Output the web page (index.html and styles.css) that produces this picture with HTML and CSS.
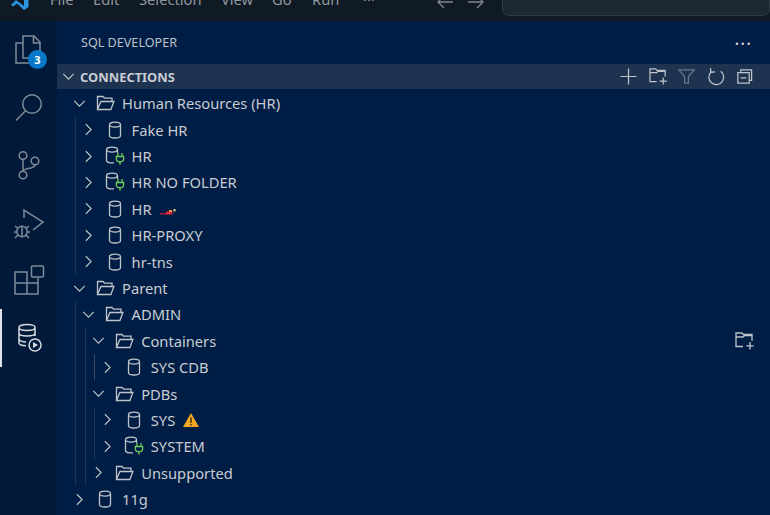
FILE: index.html
```html
<!DOCTYPE html>
<html lang="en">
<head>
<meta charset="utf-8">
<title>SQL Developer</title>
<link rel="stylesheet" href="styles.css">
</head>
<body>
<svg class="defs" width="0" height="0" aria-hidden="true">
  <defs>
    <symbol id="down" viewBox="0 0 14 8"><path d="M1 1l6 6 6-6"/></symbol>
    <symbol id="right" viewBox="0 0 8 14"><path d="M1 1l6 6-6 6"/></symbol>
    <symbol id="folder" viewBox="0 0 19 16"><path d="M1.500 14.500V1.500h5.500l1.600 1.700h7.400v3.300M1.500 14.500l3.400-8h13l-3 8z"/></symbol>
    <symbol id="db" viewBox="0 0 14 18"><path d="M1.500 4v10.500c0 1.500 2.500 2.500 5.500 2.500s5.500-1 5.500-2.500V4"/><ellipse cx="7" cy="3.600" rx="5.500" ry="2.500"/></symbol>
    <symbol id="dbplug" viewBox="0 0 20 20"><path d="M1.500 4v10.500c0 1.300 1.700 2.100 4 2.400h3.500M12.500 4v3"/><ellipse cx="7" cy="3.600" rx="5.500" ry="2.500"/><g class="plug"><path d="M13 7v3.500M17 7v3.500M11.400 10.500h7.200v2.500c0 1.500-1.500 2.700-3.600 2.700s-3.600-1.200-3.600-2.700zM15 15.700v3"/></g></symbol>
    <symbol id="folderplus" viewBox="0 0 20 18"><path d="M8 14.500H1V1h6l1.500 1.500h8.500V9M1 5h7l1.500-1.500H17"/><path d="M15 10v7.500M11.200 13.800h7.600"/></symbol>
  </defs>
</svg>
<div class="app">
  <header class="titlebar">
    <svg class="logo" viewBox="0 0 20 12"><path d="M14 0h4.500v9L14 12 7 5.500 3 8.500 1 7l5-5 8 6z"/></svg>
    <nav class="menu">
      <span class="m-file">File</span><span class="m-edit">Edit</span><span class="m-sel">Selection</span><span class="m-view">View</span><span class="m-go">Go</span><span class="m-run">Run</span><span class="m-more">···</span>
    </nav>
    <svg class="nav-arrow" viewBox="0 0 18 10"><path d="M17 3H2M8 -3L2 3l6 6"/></svg>
    <svg class="nav-arrow arrow-fwd" viewBox="0 0 18 10"><path d="M1 3h15M10 -3l6 6-6 6"/></svg>
    <div class="searchbox"></div>
  </header>
  <div class="main">
    <aside class="activity">
      <div class="act">
        <svg viewBox="0 0 32 32"><path d="M10 9H3v20h15v-5M10 2v22h17V8l-6-6zM20.500 2.500V9h6"/></svg>
        <span class="badge">3</span>
      </div>
      <div class="act"><svg viewBox="0 0 32 32"><circle cx="19" cy="13" r="9.300"/><path d="M12.300 20 3 29.500"/></svg></div>
      <div class="act"><svg viewBox="0 0 32 32"><circle cx="10" cy="6.500" r="3.800"/><circle cx="22" cy="12" r="3.800"/><circle cx="10" cy="26" r="3.800"/><path d="M10 10.500v11.500M22 16c0 4-12 3-12 6"/></svg></div>
      <div class="act"><svg viewBox="0 0 32 32"><path d="M11 11V3l19 12-10 8"/><circle cx="9" cy="24.500" r="5.200"/><path d="M2 19l3 2.500M16 19l-3 2.500M1 25h3M14 25h3M2 31l3-3M16 31l-3-3M9 19v11"/></svg></div>
      <div class="act"><svg viewBox="0 0 32 32"><path d="M2 8h12v22H2zM2 19h23v11H14M14 8v11M25 19v-5"/><rect x="18.500" y="2" width="12" height="11" rx="1"/></svg></div>
      <div class="act is-active"><svg viewBox="0 0 32 32"><path d="M6 5.500c0-1.800 3.500-3 8-3s8 1.200 8 3-3.500 3-8 3-8-1.200-8-3zM6 5.500V21c0 1.500 2.500 2.500 7 2.800M22 5.500V14M6 11c0 1.800 3.500 3 8 3s8-1.200 8-3M6 17c0 1.800 3.500 3 7 3"/><circle cx="22" cy="23" r="6"/><path class="fill" d="M20 20l5 3-5 3z"/></svg></div>
    </aside>
    <section class="sidebar">
      <div class="side-title"><span>SQL DEVELOPER</span><span class="dots">···</span></div>
      <div class="pane-head">
        <svg class="chev-d" aria-hidden="true"><use href="#down"/></svg>
        <span class="pane-name">CONNECTIONS</span>
        <div class="tools">
          <svg class="tool" viewBox="0 0 20 20"><path d="M10 1.500v17M1.500 10h17"/></svg>
          <svg class="tool tool-folder" viewBox="0 0 20 18"><use href="#folderplus"/></svg>
          <svg class="tool dim" viewBox="0 0 20 20"><path d="M2 3h16l-6 7v7H8v-7z"/></svg>
          <svg class="tool" viewBox="0 0 20 20"><path d="M4.800 1l.2 4.500 4.500-.3M15.500 4.500A7.800 7.800 0 1 1 5 5.500"/></svg>
          <svg class="tool" viewBox="0 0 20 20"><path d="M6 5V3h11.500v11H15M3 6h12v11H3zM6 11.500h6"/></svg>
        </div>
      </div>
      <div class="tree">
        <div class="row"><svg class="tw-d"><use href="#down"/></svg><span class="ic"><svg class="i-folder"><use href="#folder"/></svg></span><span>Human Resources (HR)</span></div>
        <div class="group">
          <div class="row"><svg class="tw-r"><use href="#right"/></svg><span class="ic"><svg class="i-db"><use href="#db"/></svg></span><span>Fake HR</span></div>
          <div class="row"><svg class="tw-r"><use href="#right"/></svg><span class="ic"><svg class="i-plug"><use href="#dbplug"/></svg></span><span>HR</span></div>
          <div class="row"><svg class="tw-r"><use href="#right"/></svg><span class="ic"><svg class="i-plug"><use href="#dbplug"/></svg></span><span>HR NO FOLDER</span></div>
          <div class="row"><svg class="tw-r"><use href="#right"/></svg><span class="ic"><svg class="i-db"><use href="#db"/></svg></span><span>HR</span>
            <svg class="car" viewBox="0 0 16 7"><path fill="#b3123a" d="M0 5h7v1.500H0z"/><path fill="#e0303a" d="M6 3.500h6v3H6z"/><path fill="#f08a3c" d="M9 2h3v2H9z"/><path fill="#e8d08a" d="M13.500 1h2v2.500h-2z"/><path fill="#4a1f4a" d="M12 3.500h2v3h-2z"/></svg>
          </div>
          <div class="row"><svg class="tw-r"><use href="#right"/></svg><span class="ic"><svg class="i-db"><use href="#db"/></svg></span><span>HR-PROXY</span></div>
          <div class="row"><svg class="tw-r"><use href="#right"/></svg><span class="ic"><svg class="i-db"><use href="#db"/></svg></span><span>hr-tns</span></div>
        </div>
        <div class="row"><svg class="tw-d"><use href="#down"/></svg><span class="ic"><svg class="i-folder"><use href="#folder"/></svg></span><span>Parent</span></div>
        <div class="group">
          <div class="row"><svg class="tw-d"><use href="#down"/></svg><span class="ic"><svg class="i-folder"><use href="#folder"/></svg></span><span>ADMIN</span></div>
          <div class="group">
            <div class="row"><svg class="tw-d"><use href="#down"/></svg><span class="ic"><svg class="i-folder"><use href="#folder"/></svg></span><span>Containers</span>
              <svg class="row-action" viewBox="0 0 20 18"><use href="#folderplus"/></svg>
            </div>
            <div class="group bright">
              <div class="row"><svg class="tw-r"><use href="#right"/></svg><span class="ic"><svg class="i-db"><use href="#db"/></svg></span><span>SYS CDB</span></div>
            </div>
            <div class="row"><svg class="tw-d"><use href="#down"/></svg><span class="ic"><svg class="i-folder"><use href="#folder"/></svg></span><span>PDBs</span></div>
            <div class="group">
              <div class="row"><svg class="tw-r"><use href="#right"/></svg><span class="ic"><svg class="i-db"><use href="#db"/></svg></span><span>SYS</span>
                <svg class="warn" viewBox="0 0 16 14"><path fill="#f5a623" d="M8 0l8 14H0z"/><path fill="#3a2a10" d="M7.300 4.500h1.400v5.500H7.300zM7.300 11h1.400v1.500H7.300z"/></svg>
              </div>
              <div class="row"><svg class="tw-r"><use href="#right"/></svg><span class="ic"><svg class="i-plug"><use href="#dbplug"/></svg></span><span>SYSTEM</span></div>
            </div>
            <div class="row"><svg class="tw-r"><use href="#right"/></svg><span class="ic"><svg class="i-folder"><use href="#folder"/></svg></span><span>Unsupported</span></div>
          </div>
        </div>
        <div class="row"><svg class="tw-r"><use href="#right"/></svg><span class="ic"><svg class="i-db"><use href="#db"/></svg></span><span>11g</span></div>
      </div>
    </section>
  </div>
</div>
</body>
</html>
```
FILE: styles.css
```css
html, body { margin: 0; padding: 0; height: 100%; }
body { overflow: hidden; background: #001e45; color: #c8ccd2; font-family: "Noto Sans", "Open Sans", sans-serif; font-size: 14.700px; }
.defs { position: absolute; }
svg { fill: none; stroke: #bfc4ca; stroke-width: 1.300; display: block; overflow: visible; }
.app { display: flex; flex-direction: column; width: 770px; height: 515px; overflow: hidden; }

.titlebar { height: 21px; flex: none; background: #0f1a24; display: flex; align-items: flex-start; position: relative; overflow: hidden; }
.logo { width: 20px; height: 12px; margin: -2px 0 0 10px; stroke: none; fill: #2a96e0; flex: none; }
.menu { display: flex; margin: -11px 0 0 20px; color: #8f969d; font-size: 14.700px; width: 381px; flex: none; }
.m-file { width: 43px; } .m-edit { width: 46px; } .m-sel { width: 82px; } .m-view { width: 51px; } .m-go { width: 40px; } .m-run { width: 51px; }
.nav-arrow { width: 18px; height: 10px; stroke: #808890; margin: -1px 0 0 5px; flex: none; }
.arrow-fwd { margin-left: 13px; }
.searchbox { margin: -10px 0 0 17px; flex: 1; height: 24px; background: #1e2833; border: 1px solid #2f3a44; border-radius: 7px; }

.main { flex: 1; display: flex; min-height: 0; }
.activity { width: 57px; flex: none; background: #021a3a; }
.act { height: 57.600px; display: flex; align-items: center; justify-content: center; position: relative; }
.act svg { width: 32px; height: 32px; stroke: #7f8a99; stroke-width: 1.500; }
.act.is-active { box-shadow: inset 2px 0 0 #dfe3e8; }
.act.is-active svg { stroke: #d5d9de; }
.fill { fill: #d5d9de; stroke: none; }
.badge { position: absolute; left: 28px; top: 29px; width: 19px; height: 19px; border-radius: 50%; background: #0a78c9; color: #fff; font-size: 11px; font-weight: 700; line-height: 19px; text-align: center; }

.sidebar { flex: 1; min-width: 0; background: #001e45; display: flex; flex-direction: column; }
.side-title { height: 43px; flex: none; display: flex; align-items: center; justify-content: space-between; padding: 0 18px 0 24px; font-size: 12.600px; color: #bcc2c9; }
.dots { font-size: 18px; color: #d5d9de; letter-spacing: 1px; }
.pane-head { height: 25px; flex: none; background: #1e3350; display: flex; align-items: center; font-weight: 700; font-size: 12.900px; color: #c8ccd2; }
.chev-d { width: 13px; height: 7px; margin-left: 5px; flex: none; }
.pane-name { margin-left: 5px; }
.tools { margin-left: auto; padding-right: 11px; display: flex; }
.tool { width: 19px; height: 19px; padding: 0 5px; box-sizing: content-box; stroke: #bfc4ca; }
.tool-folder { transform: translateX(1px); }
.tool.dim { stroke: #6b7688; }

.tree { padding: 1.100px 0 0 13px; font-size: 14.700px; }
.group { margin-left: 5px; border-left: 1px solid #1c3558; padding-left: 3.600px; }
.group.bright { border-left-color: #3b4a62; }
.row { height: 26.400px; display: flex; align-items: center; white-space: nowrap; }
.tw-d { width: 13px; height: 7px; margin: 0 2.500px; flex: none; }
.tw-r { width: 7px; height: 13px; margin: 0 5.500px; flex: none; }
.ic { width: 34px; flex: none; display: flex; justify-content: center; }
.i-folder { width: 19px; height: 16px; }
.i-db { width: 14px; height: 18px; }
.i-plug { width: 20px; height: 20px; }
.plug { stroke: #6fc95a; }
.car { width: 16px; height: 7px; margin: 6px 0 0 8px; stroke: none; }
.warn { width: 16px; height: 14px; margin-left: 8px; stroke: none; }
.row-action { width: 20px; height: 18px; margin-left: auto; margin-right: 15px; }
```
